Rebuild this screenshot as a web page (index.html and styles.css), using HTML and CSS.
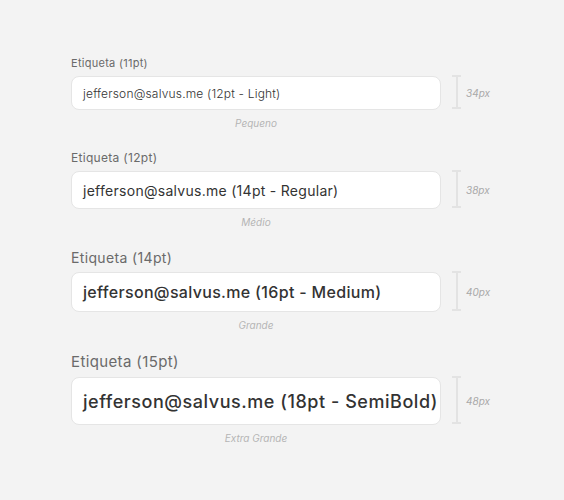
FILE: index.html
```html
<!DOCTYPE html>
<html lang="pt">
<head>
<meta charset="utf-8">
<link rel="stylesheet" href="styles.css">
</head>
<body>
<main class="page">
  <section class="field f-sm">
    <div class="label">Etiqueta (11pt)</div>
    <div class="row">
      <div class="input">jefferson@salvus.me (12pt - Light)</div>
      <div class="measure"><span class="bracket"></span><span class="px">34px</span></div>
    </div>
    <div class="caption">Pequeno</div>
  </section>
  <section class="field f-md">
    <div class="label">Etiqueta (12pt)</div>
    <div class="row">
      <div class="input">jefferson@salvus.me (14pt - Regular)</div>
      <div class="measure"><span class="bracket"></span><span class="px">38px</span></div>
    </div>
    <div class="caption">Médio</div>
  </section>
  <section class="field f-lg">
    <div class="label">Etiqueta (14pt)</div>
    <div class="row">
      <div class="input">jefferson@salvus.me (16pt - Medium)</div>
      <div class="measure"><span class="bracket"></span><span class="px">40px</span></div>
    </div>
    <div class="caption">Grande</div>
  </section>
  <section class="field f-xl">
    <div class="label">Etiqueta (15pt)</div>
    <div class="row">
      <div class="input">jefferson@salvus.me (18pt - SemiBold)</div>
      <div class="measure"><span class="bracket"></span><span class="px">48px</span></div>
    </div>
    <div class="caption">Extra Grande</div>
  </section>
</main>
</body>
</html>
```
FILE: styles.css
```css
* { box-sizing: border-box; }
html, body { margin: 0; padding: 0; }
body {
  background: #f3f3f3;
  font-family: Inter, "Noto Sans", sans-serif;
  width: 564px;
  height: 500px;
  overflow: hidden;
}
.page {
  padding: 56px 0 0 71px;
  display: flex;
  flex-direction: column;
  gap: 22px;
}
.field { display: flex; flex-direction: column; width: 370px; }
.label {
  color: #6a6a6a;
  margin-bottom: 6px;
  letter-spacing: 0.025em;
}
.row {
  display: flex;
  align-items: center;
  width: 470px;
}
.input {
  width: 370px;
  flex: none;
  background: #fff;
  border: 1px solid #e5e5e5;
  border-radius: 8px;
  padding: 0 0 0 11px;
  display: flex;
  align-items: center;
  color: #333;
  white-space: nowrap;
}
.measure {
  display: flex;
  align-items: center;
  margin-left: 11px;
  align-self: stretch;
}
.bracket {
  width: 9px;
  align-self: stretch;
  border-top: 2px solid #e3e3e3;
  border-bottom: 2px solid #e3e3e3;
  background: linear-gradient(#e3e3e3, #e3e3e3) center / 2px 100% no-repeat;
  margin: -1px 0 1px 0;
}
.px {
  margin-left: 5px;
  font-size: 10px;
  font-style: italic;
  color: #a8a8a8;
}
.caption {
  margin-top: 7px;
  text-align: center;
  font-size: 10px;
  line-height: 12px;
  font-style: italic;
  color: #b5b5b5;
}
.f-sm .label { font-size: 11px; line-height: 14px; }
.f-sm .input { height: 34px; font-size: 12px; font-weight: 300; letter-spacing: 0.015em; }
.f-md .label { font-size: 12px; line-height: 14px; }
.f-md .input { height: 38px; font-size: 14px; font-weight: 400; letter-spacing: 0.02em; }
.f-lg .label { font-size: 14px; line-height: 16px; }
.f-lg .input { height: 40px; font-size: 16px; font-weight: 450; letter-spacing: 0.02em; }
.f-xl .label { font-size: 15px; line-height: 18px; }
.f-xl .input { height: 48px; font-size: 18px; font-weight: 500; letter-spacing: 0.03em; }
```
